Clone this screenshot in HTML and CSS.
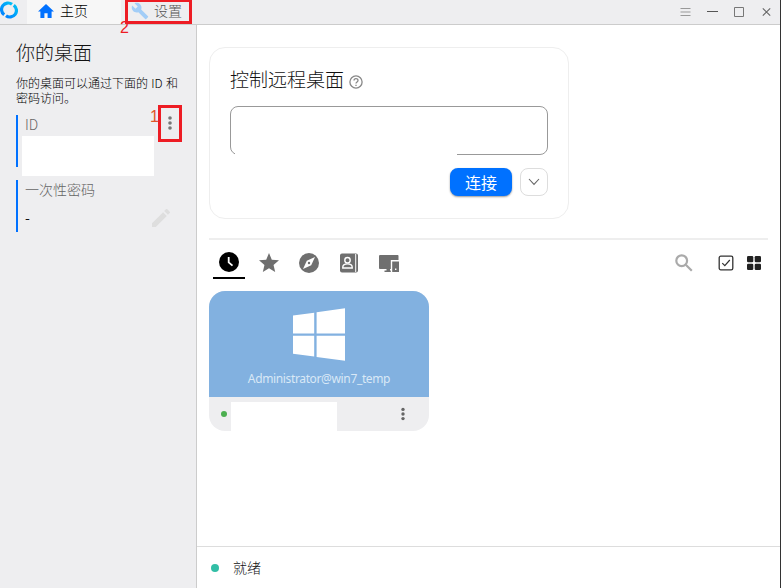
FILE: index.html
```html
<!DOCTYPE html>
<html lang="zh-CN">
<head>
<meta charset="utf-8">
<title>主页</title>
<link rel="stylesheet" href="styles.css">
</head>
<body>
<div class="window">
  <header class="titlebar">
    <svg class="logo" viewBox="0 0 18 18"><defs><linearGradient id="lg" x1="0" y1="1" x2="1" y2="0"><stop offset="0" stop-color="#0080ff"/><stop offset="1" stop-color="#00c0f5"/></linearGradient></defs><g fill="none" stroke="url(#lg)" stroke-width="3.2"><path d="M4.2 13.8A6.5 6.5 0 0 1 12 3.3"/><path d="M13.8 4.2A6.5 6.5 0 0 1 6 14.7"/></g></svg>
    <div class="tab tab-home">
      <svg class="home" viewBox="0 0 16 14"><path fill="#0071ff" d="M6.4 14V9.2h3.2V14h4V7.4H16L8 0 0 7.4h2.4V14z"/></svg>
      <span>主页</span>
    </div>
    <div class="tab tab-settings">
      <svg class="wrench" viewBox="0 0 24 24"><path fill="#a2cdf7" d="M22.7 19l-9.1-9.1c.9-2.3.4-5-1.5-6.9-2-2-5-2.4-7.4-1.3L9 6 6 9 1.6 4.7C.4 7.1.9 10.1 2.9 12.1c1.9 1.9 4.6 2.4 6.9 1.5l9.1 9.1c.4.4 1 .4 1.4 0l2.3-2.3c.5-.4.5-1.1.1-1.4z"/></svg>
      <span>设置</span>
      <b class="note note-two">2</b>
    </div>
    <div class="controls">
      <svg viewBox="0 0 12 12"><path d="M1.5 2.5h10M1.5 6h10M1.5 9.5h10" stroke="#999"/></svg>
      <svg viewBox="0 0 12 12"><path d="M1 5.5h11" stroke="#555"/></svg>
      <svg viewBox="0 0 12 12"><path d="M1.5 1.5h9v9h-9z" fill="none" stroke="#777"/></svg>
      <svg viewBox="0 0 12 12"><path d="M2.8 2.3l7.4 7.4M10.2 2.3L2.8 9.7" stroke="#666" stroke-width="1.1"/></svg>
    </div>
  </header>
  <div class="body">
    <aside class="sidebar">
      <h1>你的桌面</h1>
      <p>你的桌面可以通过下面的 ID 和<br>密码访问。</p>
      <section class="field field-id">
        <div class="label">ID</div>
        <div class="cover"></div>
        <div class="more-box"><svg viewBox="0 0 4 14"><g fill="#777"><circle cx="2" cy="2" r="1.8"/><circle cx="2" cy="7" r="1.8"/><circle cx="2" cy="12" r="1.8"/></g></svg></div>
        <b class="note note-one">1</b>
      </section>
      <section class="field">
        <div class="label">一次性密码</div>
        <div class="value"><span>-</span><svg viewBox="3 3 18 18"><path fill="#dedede" d="M3 17.25V21h3.75L17.81 9.94l-3.75-3.75L3 17.25zM20.71 7.04a1 1 0 0 0 0-1.41l-2.34-2.34a1 1 0 0 0-1.41 0l-1.83 1.83 3.75 3.75 1.83-1.83z"/></svg></div>
      </section>
    </aside>
    <main class="main">
      <div class="content">
        <section class="remote">
          <h2>控制远程桌面<svg viewBox="0 0 14 14"><circle cx="7" cy="7" r="6.1" fill="none" stroke="#888" stroke-width="1.3"/><path d="M5 5.6C5 3 9 3 9 5.5 9 6.9 7 7 7 8.6" fill="none" stroke="#888" stroke-width="1.3"/><path d="M6.35 9.7h1.3v1.3h-1.3z" fill="#888"/></svg></h2>
          <div class="input"><i class="mask"></i></div>
          <div class="actions">
            <button class="connect">连接</button>
            <button class="drop"><svg viewBox="0 0 12 8"><path d="M1 1l5 5.4L11 1" fill="none" stroke="#666" stroke-width="1.1"/></svg></button>
          </div>
        </section>
        <nav class="toolbar">
          <span class="tool active"><svg viewBox="2 2 20 20"><circle cx="12" cy="12" r="10"/><path d="M11.7 7v5.3l3.8 3.4" fill="none" stroke="#fff" stroke-width="1.8"/></svg></span>
          <span class="tool"><svg viewBox="2 2 20 20"><path d="M12 17.27L18.18 21l-1.64-7.03L22 9.24l-7.19-.61L12 2 9.19 8.63 2 9.24l5.46 4.73L5.82 21z"/></svg></span>
          <span class="tool"><svg viewBox="2 2 20 20"><circle cx="12" cy="12" r="10"/><path fill="#fff" d="M18 6l-3.8 8.2L6 18l3.8-8.2z"/><circle cx="12" cy="12" r="1.2"/></svg></span>
          <span class="tool"><svg viewBox="0 0 20 20"><rect x="1" y=".5" width="18" height="19" rx="2"/><path d="M16.7 1v18" stroke="#fff" stroke-width="1"/><g fill="none" stroke="#fff" stroke-width="1.4"><circle cx="8.5" cy="7.2" r="2.7"/><path d="M3.8 15v-.8c0-4.4 9.4-4.4 9.4 0v.8z"/></g></svg></span>
          <span class="tool"><svg viewBox="0 0 20 20"><path d="M1.2 2h17.3c.6 0 1 .4 1 1v4h-7.7v9H11v1.4h.8V19H5.5v-1.6h2V16H1.2c-.6 0-1.2-.5-1.2-1.1V3.1C0 2.5.6 2 1.2 2z"/><path d="M13.2 8.5H20V19h-6.8z"/><path d="M16 15.5h1.4v1.4H16z" fill="#fff"/></svg></span>
          <span class="spacer"></span>
          <svg class="search" viewBox="0 0 18 18"><g fill="none" stroke="#aaa" stroke-width="2.2"><circle cx="6.7" cy="6.7" r="5.4"/><path d="M10.8 10.8l6 6"/></g></svg>
          <svg class="check" viewBox="0 0 16 16"><rect x="1.2" y="1.2" width="13.6" height="13.6" rx="1.6" fill="none" stroke="#333" stroke-width="1.3"/><path d="M4.3 8.2l2.5 2.5 5-5.7" fill="none" stroke="#333" stroke-width="1.2"/></svg>
          <svg class="grid" viewBox="0 0 14 14"><g fill="#222"><rect width="6.3" height="6.3" rx="1.3"/><rect x="7.7" width="6.3" height="6.3" rx="1.3"/><rect y="7.7" width="6.3" height="6.3" rx="1.3"/><rect x="7.7" y="7.7" width="6.3" height="6.3" rx="1.3"/></g></svg>
        </nav>
        <article class="peer">
          <div class="peer-top">
            <svg viewBox="0 0 52 53"><path fill="#fff" d="M0 7.6L21.2 4.7v20.8H0zM23.6 4.3L52 .3v25.2H23.6zM0 27.8h21.2v20.7L0 45.7zM23.6 27.8H52v24.9l-28.4-3.8z"/></svg>
            <span>Administrator@win7_temp</span>
          </div>
          <div class="peer-bottom">
            <i class="online"></i><i class="peer-cover"></i>
            <svg viewBox="0 0 4 14"><g fill="#666"><circle cx="2" cy="2.4" r="1.7"/><circle cx="2" cy="7" r="1.7"/><circle cx="2" cy="11.6" r="1.7"/></g></svg>
          </div>
        </article>
      </div>
      <footer class="status"><i></i><span>就绪</span></footer>
    </main>
  </div>
</div>
</body>
</html>
```
FILE: styles.css
```css
* { box-sizing: border-box; }
body { margin: 0; font-family: "Noto Sans CJK SC", sans-serif; font-weight: 300; color: #111; }
svg { display: block; flex: none; }
h1, h2, p { margin: 0; font-weight: 300; }
.window { width: 781px; height: 588px; display: flex; flex-direction: column; background: #fff; border-right: 1px solid #333; overflow: hidden; }
.titlebar { height: 25px; flex: none; display: flex; background: #eeeef0; border-bottom: 1px solid #ccc; }
.logo { width: 18px; height: 18px; margin: 1px 9px 0 0; }
.tab { position: relative; display: flex; font-size: 14px; line-height: 21px; height: 24px; }
.tab-home { width: 94px; padding-left: 11px; background: #f7f7f7; color: #000; }
.home { width: 16px; height: 14px; margin: 4px 6px 0 0; }
.tab-settings { width: 67px; margin-left: 4px; padding-left: 3px; border: 3px solid #ed1c24; border-top-width: 2px; color: #555; line-height: 17px; }
.wrench { width: 18px; height: 18px; margin: 0 5px 0 0; }
.note { position: absolute; font: 16px/16px "Liberation Sans", sans-serif; z-index: 2; }
.note-two { left: -8px; top: 18px; color: #ed1c24; }
.controls { margin-left: auto; display: flex; gap: 15px; padding: 6px 8px 0 0; }
.controls svg { width: 12px; height: 12px; }
.body { flex: 1; display: flex; min-height: 0; }
.sidebar { width: 197px; flex: none; background: #eeeef0; border-right: 1px solid #ccc; padding: 14px 0 0 16px; }
.sidebar h1 { font-size: 19px; line-height: 26px; }
.sidebar p { font-size: 12px; line-height: 15px; margin: 10px 0; white-space: nowrap; word-spacing: 0.7px; color: #000; }
.field { position: relative; height: 52px; border-left: 2px solid #0071ff; margin-bottom: 13px; }
.label { font-size: 14px; line-height: 18px; padding-left: 7px; color: #666; }
.cover { width: 132px; height: 40px; margin: 3px 0 0 4px; background: #fff; }
.more-box { position: absolute; left: 140px; top: -10px; width: 24px; height: 37px; border: 3px solid #ed1c24; padding: 8px 0 0 7px; }
.more-box svg { width: 4px; height: 14px; }
.note-one { left: 132px; top: -6px; color: #e0542b; }
.value { display: flex; justify-content: space-between; padding: 9px 26px 0 7px; font-size: 14px; line-height: 20px; font-weight: 400; }
.value svg { width: 18px; height: 18px; margin-top: 2px; }
.main { flex: 1; display: flex; flex-direction: column; min-width: 0; }
.content { flex: 1; padding: 22px 12px 0; }
.remote { width: 360px; height: 172px; border: 1px solid #eee; border-radius: 16px; padding: 17px 20px 0; }
.remote h2 { display: flex; align-items: center; font-size: 19px; line-height: 28px; }
.remote h2 svg { width: 14px; height: 14px; margin: 5px 0 0 5px; }
.input { position: relative; height: 49px; margin-top: 13px; border: 1px solid #999; border-radius: 8px; }
.mask { position: absolute; left: 4px; bottom: -1px; width: 222px; height: 4px; background: #fff; }
.actions { display: flex; justify-content: flex-end; gap: 8px; margin-top: 13px; }
button { font-family: inherit; padding: 0; }
.connect { width: 62px; height: 28px; border: 0; border-radius: 8px; background: #0071ff; color: #fff; font-size: 16px; line-height: 26px; font-weight: 400; box-shadow: 0 1px 2px #0006; }
.drop { width: 28px; height: 28px; border: 1px solid #ddd; border-radius: 8px; background: #fff; display: grid; place-items: center; }
.drop svg { width: 12px; height: 8px; }
.toolbar { display: flex; margin-top: 19px; border-top: 2px solid #eee; height: 53px; padding: 9px 7px 0 4px; }
.tool { width: 32px; height: 30px; margin-right: 8px; padding: 4px 6px 0; fill: #6f6f6f; }
.tool svg { width: 20px; height: 20px; }
.active { border-bottom: 2px solid #000; fill: #000; padding-top: 3px; }
.spacer { flex: 1; }
.search { width: 18px; height: 18px; margin: 5px 25px 0 0; }
.check { width: 16px; height: 16px; margin: 6px 13px 0 0; }
.grid { width: 14px; height: 14px; margin-top: 7px; }
.peer { width: 220px; height: 140px; border-radius: 16px; overflow: hidden; background: #eeeef0; }
.peer-top { height: 106px; background: #82b1e0; display: flex; flex-direction: column; align-items: center; padding-top: 17px; }
.peer-top svg { width: 52px; height: 53px; }
.peer-top span { font: 12px/16px "Noto Sans", sans-serif; color: #d9e8f6; margin-top: 10px; letter-spacing: -0.36px; }
.peer-bottom { height: 34px; display: flex; align-items: center; padding-left: 12px; }
.online { width: 6px; height: 6px; border-radius: 50%; background: #4caf50; }
.peer-cover { width: 106px; height: 29px; margin: 5px 0 0 4px; background: #fff; }
.peer-bottom svg { width: 4px; height: 14px; margin-left: 64px; }
.status { height: 42px; flex: none; border-top: 1px solid #ddd; display: flex; align-items: center; font-size: 14px; padding-left: 14px; }
.status i { width: 8px; height: 8px; border-radius: 50%; background: #32bea6; margin-right: 14px; }
.status span { margin-top: -2px; }
```
